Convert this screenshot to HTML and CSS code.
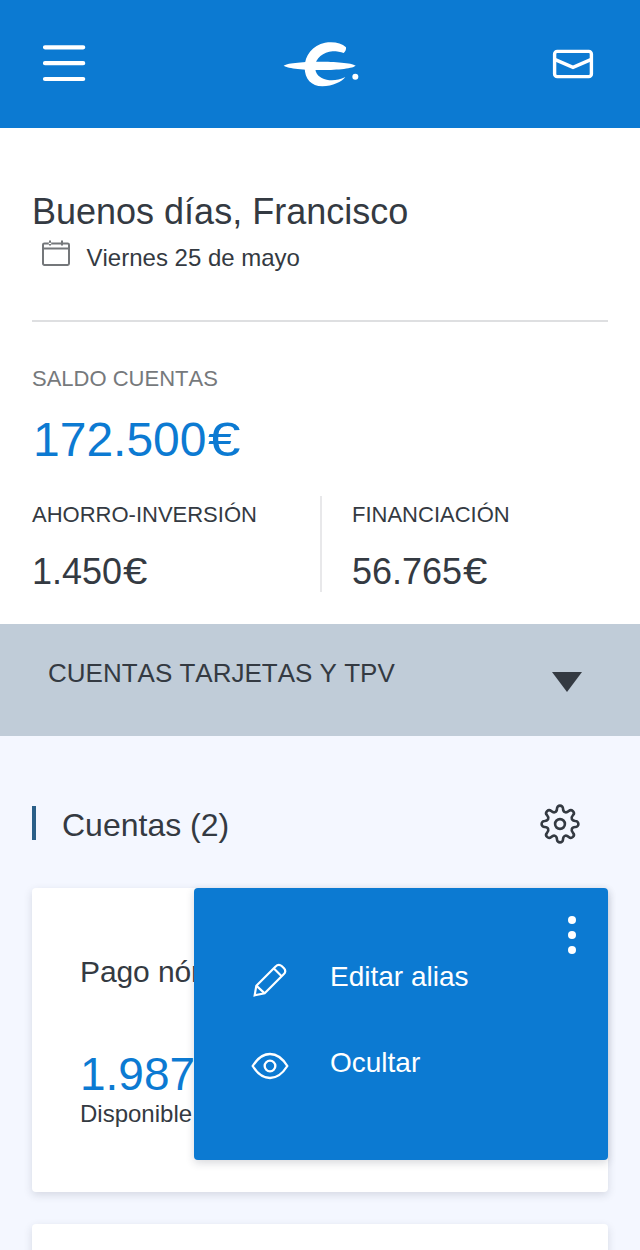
FILE: index.html
```html
<!DOCTYPE html>
<html lang="es">
<head>
<meta charset="utf-8">
<title>Posición global</title>
<link rel="stylesheet" href="styles.css">
</head>
<body>
<div class="screen">
  <header class="topbar">
    <svg class="burger" viewBox="0 0 44 44" fill="none" stroke="#fff" stroke-width="4.2" stroke-linecap="round"><path d="M3 6.3H41.2M3 22.2H41.2M3 38H41.2"/></svg>
    <svg class="logo" viewBox="0 0 300 210" fill="#fff">
      <path d="M41 107C54 98 105 95 149 95S244 98 257 107C244 117 193 120 149 120S54 116 41 107Z"/>
      <path d="M221 69Q229 63 228 52C214 38 190 34 165 38C128 45 104 76 104 112C104 147 124 169 157 169C188 168 216 155 226 141C206 150 188 153 170 149C148 144 136 132 135 110C136 84 160 67 188 64C201 64 212 66 221 69Z"/>
      <circle cx="256" cy="140" r="9"/>
    </svg>
    <svg class="mail" viewBox="0 0 42 30" fill="none" stroke="#fff" stroke-width="3.4"><rect x="2.6" y="2.4" width="36.8" height="25.2" rx="2.6"/><path d="M2.6 10.4L21 18.4L39.4 10.4"/></svg>
  </header>

  <section class="summary">
    <h1 class="greeting">Buenos días, Francisco</h1>
    <div class="date">
      <svg class="calendar" viewBox="0 0 28 27" fill="none" stroke="#74777a" stroke-width="2"><rect x="1" y="3.4" width="26" height="21.6" rx="1.4"/><path d="M1 8.5H27"/><path d="M8 0.5V5.5M20 0.5V5.5"/><path d="M6.8 3.4H9.2" stroke="#fff" stroke-width="1.2"/></svg>
      <span>Viernes 25 de mayo</span>
    </div>
    <div class="balance">
      <div class="label muted">SALDO CUENTAS</div>
      <div class="total">172.500<span class="euro">€</span></div>
    </div>
    <div class="figures">
      <div class="figure">
        <div class="label">AHORRO-INVERSIÓN</div>
        <div class="amount">1.450<span class="euro">€</span></div>
      </div>
      <div class="figure divided">
        <div class="label">FINANCIACIÓN</div>
        <div class="amount">56.765<span class="euro">€</span></div>
      </div>
    </div>
  </section>

  <div class="band">
    <span>CUENTAS TARJETAS Y TPV</span>
    <svg class="caret" viewBox="0 0 30 20"><path d="M0 0H30L15 20Z" fill="#343a42"/></svg>
  </div>

  <section class="accounts">
    <div class="heading">
      <span class="marker"></span>
      <h2 class="title">Cuentas (2)</h2>
      <svg class="gear" viewBox="-20 -20 40 40" fill="none" stroke="#343a42" stroke-width="2.6" stroke-linejoin="round">
        <path d="M-3-15.4A3 3 0 0 1 3-15.4C3.2-11.6 5.94-10.47 8.77-13.01A3 3 0 0 1 13.01-8.77C10.47-5.94 11.6-3.2 15.4-3A3 3 0 0 1 15.4 3C11.6 3.2 10.47 5.94 13.01 8.77A3 3 0 0 1 8.77 13.01C5.94 10.47 3.2 11.6 3 15.4A3 3 0 0 1-3 15.4C-3.2 11.6-5.94 10.47-8.77 13.01A3 3 0 0 1-13.01 8.77C-10.47 5.94-11.6 3.2-15.4 3A3 3 0 0 1-15.4-3C-11.6-3.2-10.47-5.94-13.01-8.77A3 3 0 0 1-8.77-13.01C-5.94-10.47-3.2-11.6-3-15.4Z"/>
        <circle r="4.9"/>
      </svg>
    </div>
    <article class="card">
      <div class="alias">Pago nómina</div>
      <div class="available">1.987</div>
      <div class="caption">Disponible</div>
      <div class="menu">
        <svg class="dots" viewBox="0 0 8 38" fill="#fff"><circle cx="4" cy="4" r="4"/><circle cx="4" cy="19" r="4"/><circle cx="4" cy="34" r="4"/></svg>
        <div class="item">
          <svg class="icon" viewBox="30 180 120 120" fill="none" stroke="#fff" stroke-width="6.5"><path d="M44 286L49 257L106 200Q116 190 125 198L132 205Q140 214 131 223L74 280Z"/><path d="M49 257L74 280M101 205L125 229"/></svg>
          <span>Editar alias</span>
        </div>
        <div class="item">
          <svg class="icon eye" viewBox="30 436 120 120" fill="none" stroke="#fff" stroke-width="7" stroke-linejoin="round"><path d="M38 496C68 448 112 448 142 496C112 544 68 544 38 496Z"/><circle cx="90" cy="496" r="16"/></svg>
          <span>Ocultar</span>
        </div>
      </div>
    </article>
    <article class="card"></article>
  </section>
</div>
</body>
</html>
```
FILE: styles.css
```css
* { box-sizing: border-box; }
body {
  margin: 0;
  font-family: "Liberation Sans", Arial, sans-serif;
  font-kerning: none;
  color: #343a42;
  background: #f4f7ff;
}
svg { display: block; flex: none; }
h1, h2 { margin: 0; font-weight: 400; }
.screen { width: 640px; height: 1250px; overflow: hidden; }

.topbar {
  height: 128px;
  background: #0c7ad2;
  display: grid;
  grid-template-columns: 1fr 100px 1fr;
  align-items: center;
  padding: 0 46px 0 42px;
}
.burger { width: 44px; height: 44px; margin-top: -2px; }
.logo { width: 100px; height: 70px; margin: 2px 0 0 2px; }
.mail { width: 42px; height: 30px; justify-self: end; }

.summary { background: #fff; height: 496px; padding: 64px 32px 0; }
.greeting { font-size: 36px; line-height: 40px; }
.date {
  display: flex;
  height: 90px;
  padding: 12px 0 0 10px;
  border-bottom: 2px solid #dedfe1;
  font-size: 24px;
  line-height: 28px;
}
.calendar { width: 28px; height: 27px; margin: -4px 16.5px 0 0; }
.balance { padding-top: 43px; }
.label { font-size: 22px; line-height: 28px; }
.muted { color: #76797c; }
.total { margin-top: 19px; padding-left: 1px; font-size: 48px; line-height: 56px; color: #0c7ad2; }
.euro { display: inline-block; transform: scaleX(1.22); transform-origin: left; margin-left: 1px; }
.figures { display: grid; grid-template-columns: 1fr 1fr; margin-top: 28px; }
.figure { height: 96px; padding-top: 5px; }
.divided { border-left: 2px solid #e8e8ea; padding-left: 30px; }
.amount { margin-top: 23px; font-size: 36px; line-height: 40px; }

.band {
  height: 112px;
  background: #c0ccd8;
  display: flex;
  justify-content: space-between;
  padding: 33px 58px 0 48px;
  font-size: 26px;
  line-height: 32px;
}
.caret { width: 30px; height: 20px; margin-top: 15px; }

.accounts { padding: 68px 32px 0; }
.heading { display: flex; align-items: center; height: 40px; margin-bottom: 44px; }
.marker { width: 4px; height: 34px; background: #2a5f88; margin-top: -2px; }
.title { margin-left: 26px; font-size: 32px; line-height: 40px; padding-top: 2px; }
.gear { width: 40px; height: 40px; margin: 0 28px 0 auto; }

.card {
  position: relative;
  height: 304px;
  margin-bottom: 32px;
  padding: 66px 48px 0;
  background: #fff;
  border-radius: 4px;
  box-shadow: 0 3px 8px rgba(40, 45, 65, 0.15);
}
.alias { font-size: 30px; line-height: 36px; margin-bottom: 58px; letter-spacing: -0.1px; }
.available { font-size: 46px; line-height: 52px; color: #0c7ad2; }
.caption { font-size: 24px; line-height: 28px; }

.menu {
  position: absolute;
  top: 0;
  right: 0;
  width: 414px;
  height: 272px;
  padding: 73px 0 0 56px;
  background: #0c7ad2;
  border-radius: 4px;
  box-shadow: 0 3px 8px rgba(40, 45, 65, 0.18);
}
.dots { position: absolute; top: 28px; right: 32px; width: 8px; height: 38px; }
.item {
  display: flex;
  align-items: center;
  gap: 40px;
  height: 32px;
  margin-bottom: 54px;
  font-size: 28px;
  line-height: 32px;
  color: #fff;
}
.icon { width: 40px; height: 40px; margin-top: 6px; }
.eye { margin-top: 5px; }
```
